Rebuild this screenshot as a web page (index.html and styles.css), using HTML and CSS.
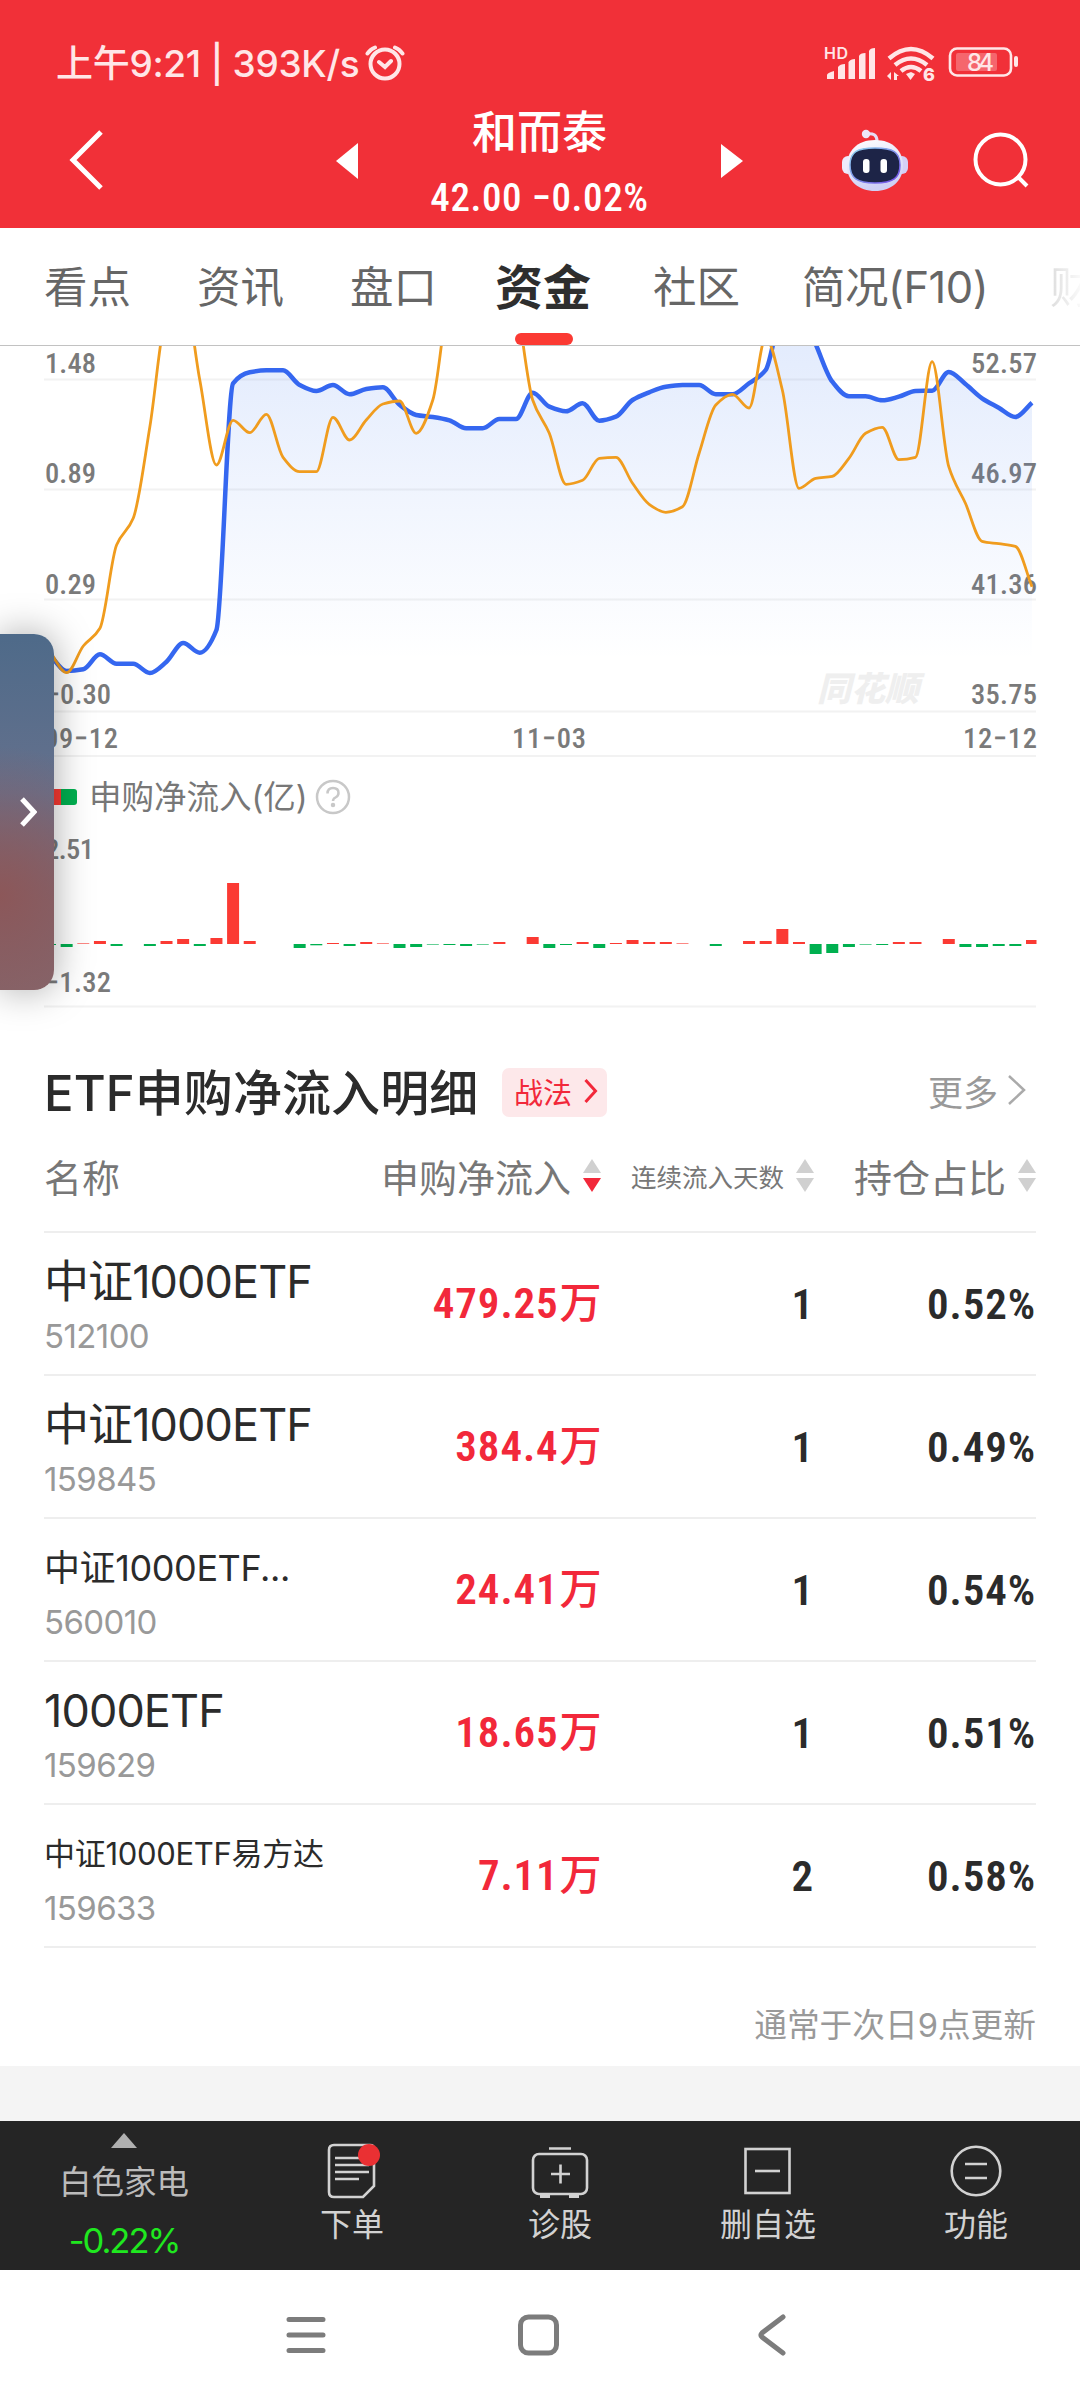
FILE: index.html
```html
<!DOCTYPE html>
<html lang="zh-CN">
  <head>
    <meta charset="UTF-8" />
    <meta name="viewport" content="width=device-width, initial-scale=1.0" />
    <title>和而泰 - 资金</title>
    <link rel="stylesheet" href="styles.css">
  </head>
  <body>
    <header class="header">
      <div class="status-bar">
        <span class="status-time">上午9:21 | 393K/s</span>
        <svg class="alarm" width="40" height="36" viewBox="0 0 40 36">
          <circle cx="20" cy="19" r="14.5" />
          <path d="M14 17l6 5 6-6M2.500 8.500Q5 4.500 10 2.500M37.500 8.500Q35 4.500 30 2.500" />
        </svg>
        <div class="status-icons">
          <svg width="194" height="40" viewBox="0 0 194 40">
            <g fill="#ffe6e7">
              <text class="hd" x="0" y="16" textLength="24">HD</text>
              <path d="M3 36v-4q0-2 7-4v8zM14 36V24q2-3 7-3v15zM24.500 36V19q2-3 6.500-3v20zM35 36V13q1-3 6.500-3v26zM45 36V8q1-3 6-3v31z" />
              <path d="M82 31l5-2 4 2-4.500 6z" />
              <text class="wifi-gen" x="99" y="38">6</text>
              <path d="M67 29v8l-4-4zM70 37v-8l5 4h-2v4z" />
              <rect x="132" y="10" width="41" height="18" rx="2" fill-opacity=".3" />
              <text class="battery-text" x="143" y="28" textLength="27">84</text>
              <rect x="190" y="13" width="4" height="11" rx="2" />
            </g>
            <g fill="none" stroke="#ffe6e7" stroke-width="4.500">
              <path d="M65 15.500q22-19 44 0M71 22q16-13 32 0M77 28q10-8 20 0" />
              <rect x="126" y="5.500" width="61" height="27" rx="7" stroke-width="2.600" />
            </g>
          </svg>
        </div>
      </div>

      <div class="title-bar">
        <svg class="back" width="40" height="64" viewBox="0 0 40 64">
          <path d="M34 4L6 32l28 28" />
        </svg>
        <svg class="prev" width="22" height="36" viewBox="0 0 22 36"><path d="M22 0v36L0 18z" /></svg>
        <div class="stock">
          <h1>和而泰</h1>
          <p>42.00 −0.02%</p>
        </div>
        <svg class="next" width="22" height="34" viewBox="0 0 22 34"><path d="M0 0v34l22-17z" /></svg>
        <svg class="robot" width="68" height="64" viewBox="0 0 68 64">
          <defs>
            <linearGradient id="shell" x1="0" y1="0" x2="0.300" y2="1">
              <stop offset="0" stop-color="#ffffff" />
              <stop offset="1" stop-color="#cfd0f6" />
            </linearGradient>
            <linearGradient id="rim" x1="0" y1="0" x2="1" y2="1">
              <stop offset="0" stop-color="#8fd8ee" />
              <stop offset="1" stop-color="#7048e8" />
            </linearGradient>
          </defs>
          <path d="M25 6q11-2 11 7" fill="none" stroke="#e6dcf5" stroke-width="3" />
          <circle cx="25" cy="6" r="4.200" fill="#eee6f8" />
          <rect x="1" y="28" width="12" height="18" rx="6" fill="#eeeafc" />
          <rect x="55" y="28" width="12" height="18" rx="6" fill="#d5cff7" />
          <path d="M34 12c18 0 28 11 28 26S50 63 34 63 6 53 6 38s10-26 28-26z" fill="url(#shell)" />
          <path d="M34 20c18 0 25 4 25 17s-7 18-25 18S9 50 9 37s7-17 25-17z" fill="#1d2447" stroke="url(#rim)" stroke-width="1.500" />
          <rect x="22" y="31" width="6.500" height="14" rx="3" fill="#fff" />
          <rect x="39.500" y="31" width="6.500" height="14" rx="3" fill="#fff" />
        </svg>
        <svg class="search" width="56" height="58" viewBox="0 0 56 58">
          <circle cx="27.500" cy="27.500" r="25" />
          <path d="M44 44l10 10" />
        </svg>
      </div>
    </header>

    <nav class="tabs">
      <span>看点</span>
      <span>资讯</span>
      <span>盘口</span>
      <span class="active">资金</span>
      <span>社区</span>
      <span class="profile">简况(F10)</span>
      <span class="faded">财</span>
    </nav>

    <main>
      <section class="charts">
        <svg class="line-chart" width="1080" height="414" viewBox="0 346 1080 414">
          <defs>
            <linearGradient id="area" gradientUnits="userSpaceOnUse" x1="0" y1="346" x2="0" y2="660">
              <stop offset="0" stop-color="#3a76f0" stop-opacity=".14" />
              <stop offset="1" stop-color="#3a76f0" stop-opacity="0" />
            </linearGradient>
          </defs>
          <path class="grid" d="M44 379.500H1036M44 489.500H1036M44 599.500H1036M44 711.500H1036M44 756H1036" />
          <text class="watermark" x="817" y="701" textLength="102">同花顺</text>
          <g class="axis">
            <text x="45" y="373" textLength="51">1.48</text>
            <text x="45" y="483" textLength="51">0.89</text>
            <text x="45" y="594" textLength="51">0.29</text>
            <text x="46" y="704" textLength="65">−0.30</text>
            <text x="971" y="373" textLength="66">52.57</text>
            <text x="971" y="483" textLength="66">46.97</text>
            <text x="971" y="594" textLength="66">41.36</text>
            <text x="971" y="704" textLength="66">35.75</text>
            <text x="44" y="748" textLength="74">09−12</text>
            <text x="512" y="748" textLength="74">11−03</text>
            <text x="963" y="748" textLength="74">12−12</text>
          </g>
          <path id="netArea" fill="url(#area)" />
          <path id="netLine" class="net-line" />
          <path id="priceLine" class="price-line" />
        </svg>

        <div class="legend">
          <i class="swatch"></i>
          <span>申购净流入(亿)</span>
          <svg width="36" height="36" viewBox="0 0 36 36">
            <circle cx="18" cy="18" r="16" />
            <path d="M12.500 14.500q0-5.500 5.500-5.500t5.500 5q0 3-3 4.500-2.500 1.200-2.500 3.500v0" />
            <circle class="dot" cx="18" cy="26" r="1" />
          </svg>
        </div>

        <svg class="bar-chart" width="1080" height="180" viewBox="0 830 1080 180">
          <path class="grid" d="M44 1006.500H1036" />
          <g class="axis">
            <text x="45" y="859" textLength="49">2.51</text>
            <text x="45" y="992" textLength="66">−1.32</text>
          </g>
          <g id="bars"></g>
        </svg>

        <div class="drawer">
          <svg width="18" height="32" viewBox="0 0 18 32"><path d="M3 3l12 13L3 29" /></svg>
        </div>
      </section>

      <section class="detail">
        <div class="detail-head">
          <h2>ETF申购净流入明细</h2>
          <span class="badge">战法
            <svg width="14" height="26" viewBox="0 0 14 26"><path d="M1.500 2l10 11-10 11" /></svg>
          </span>
          <span class="more">更多
            <svg width="20" height="32" viewBox="0 0 20 32"><path d="M2 2l15 14L2 30" /></svg>
          </span>
        </div>

        <div class="row row-head">
          <span>名称</span>
          <span class="cell">申购净流入 <i class="sort desc"></i></span>
          <span class="cell small">连续流入天数 <i class="sort"></i></span>
          <span class="cell">持仓占比 <i class="sort"></i></span>
        </div>

        <div class="row">
          <div class="fund"><b>中证1000ETF</b><small>512100</small></div>
          <span class="amount">479.25<em>万</em></span>
          <span class="num">1</span>
          <span class="num">0.52%</span>
        </div>
        <div class="row">
          <div class="fund"><b>中证1000ETF</b><small>159845</small></div>
          <span class="amount">384.4<em>万</em></span>
          <span class="num">1</span>
          <span class="num">0.49%</span>
        </div>
        <div class="row">
          <div class="fund"><b class="md">中证1000ETF...</b><small>560010</small></div>
          <span class="amount">24.41<em>万</em></span>
          <span class="num">1</span>
          <span class="num">0.54%</span>
        </div>
        <div class="row">
          <div class="fund"><b>1000ETF</b><small>159629</small></div>
          <span class="amount">18.65<em>万</em></span>
          <span class="num">1</span>
          <span class="num">0.51%</span>
        </div>
        <div class="row">
          <div class="fund"><b class="sm">中证1000ETF易方达</b><small>159633</small></div>
          <span class="amount">7.11<em>万</em></span>
          <span class="num">2</span>
          <span class="num">0.58%</span>
        </div>

        <p class="note">通常于次日9点更新</p>
      </section>
    </main>

    <footer class="toolbar">
      <div class="sector">
        <i class="caret"></i>
        <span>白色家电</span>
        <strong>-0.22%</strong>
      </div>
      <div class="tool">
        <svg width="60" height="60" viewBox="0 0 60 60">
          <path d="M12 4h36q4 0 4 4v37L41 56H12q-5 0-5-5V9q0-5 5-5z" />
          <path d="M13 17h34M13 24h34M13 31h34M13 38h24" />
          <circle class="red-dot" cx="47" cy="14" r="11" />
        </svg>
        <span>下单</span>
      </div>
      <div class="tool">
        <svg width="60" height="60" viewBox="0 0 60 60">
          <rect x="3" y="13" width="54" height="40" rx="6" />
          <path d="M19 7.500h22M21 33h19M30.500 23.500v19" />
          <path stroke-width="4" d="M10 55h10M39 55h10" />
        </svg>
        <span>诊股</span>
      </div>
      <div class="tool">
        <svg width="60" height="60" viewBox="0 0 60 60">
          <rect x="7.500" y="8" width="44" height="44" />
          <path d="M17 30h25" />
        </svg>
        <span>删自选</span>
      </div>
      <div class="tool">
        <svg width="60" height="60" viewBox="0 0 60 60">
          <circle cx="30" cy="30" r="24.300" />
          <path d="M19 23h22M19 37h22" />
        </svg>
        <span>功能</span>
      </div>
    </footer>

    <div class="system-nav">
      <svg width="44" height="44" viewBox="0 0 44 44"><path d="M5 6.500h34M5 22h34M5 37.500h34" /></svg>
      <svg width="44" height="44" viewBox="0 0 44 44"><rect x="3.500" y="4" width="36" height="36" rx="8" /></svg>
      <svg width="44" height="44" viewBox="0 0 44 44"><path d="M33 4L12 20q-2 2 0 4l21 16" /></svg>
    </div>

    <script src="script.js"></script>
  </body>
</html>
```
FILE: styles.css
```css
* {
  margin: 0;
  padding: 0;
  box-sizing: border-box;
}

body {
  width: 1080px;
  height: 2400px;
  overflow: hidden;
  background-color: #fff;
  font-family: Inter, "Noto Sans CJK SC", sans-serif;
  color: #2b2b2b;
}

svg {
  display: block;
  flex: none;
}

i,
em {
  font-style: normal;
}

/* Header */
.header {
  height: 228px;
  background-color: #f13038;
  color: #fff;
}

.status-bar {
  display: flex;
  align-items: center;
  height: 108px;
  padding: 18px 62px 0 56px;
}

.status-time {
  width: 309px;
  padding-bottom: 4px;
  color: #ffe6e7;
  font-size: 37px;
  font-weight: 500;
  letter-spacing: -0.3px;
  white-space: nowrap;
}

.alarm {
  fill: none;
  stroke: #ffe6e7;
  stroke-width: 4;
  stroke-linecap: round;
}

.status-icons {
  margin-left: auto;
}

.status-icons svg {
  overflow: visible;
}

.hd {
  font-size: 16px;
  font-weight: 600;
}

.wifi-gen {
  font-size: 18px;
  font-weight: 800;
}

.battery-text {
  font-size: 24px;
  font-weight: 500;
}

.title-bar {
  display: flex;
  align-items: center;
  height: 106px;
}

.back {
  margin: -3px 0 0 67px;
  fill: none;
  stroke: #fff;
  stroke-width: 5;
}

.prev {
  margin-left: 229px;
  fill: #fff;
}

.next {
  fill: #fff;
}

.stock {
  width: 363px;
  text-align: center;
}

.stock h1 {
  height: 68px;
  font-size: 45px;
  font-weight: 500;
  line-height: 59px;
}

.stock p {
  height: 48px;
  font-family: Roboto, sans-serif;
  font-size: 39px;
  font-weight: 500;
  font-stretch: 85%;
  line-height: 54px;
  letter-spacing: 0.6px;
  white-space: nowrap;
}

.robot {
  margin: -2px 0 0 98px;
}

.search {
  margin-left: 64px;
  fill: none;
  stroke: #fff;
  stroke-width: 4;
}

/* Tabs */
.tabs {
  display: flex;
  align-items: center;
  gap: 66px;
  height: 118px;
  padding: 0 0 5px 44px;
  border-bottom: 1px solid #c2c2c2;
  overflow: hidden;
  white-space: nowrap;
  font-size: 43.5px;
  color: #666;
}

.tabs .active {
  position: relative;
  margin: 0 -4px 0 -8px;
  font-size: 48px;
  font-weight: 700;
  color: #2e2e2e;
}

.tabs .active::after {
  content: "";
  position: absolute;
  left: 20px;
  bottom: -26px;
  width: 58px;
  height: 12px;
  border-radius: 6px;
  background-color: #fb3a33;
}

.tabs .profile {
  margin: 0 -4px 0 -4px;
  letter-spacing: -0.5px;
}

.tabs .faded {
  background: linear-gradient(90deg, #ddd, #fff 36px);
  -webkit-background-clip: text;
  background-clip: text;
  color: transparent;
}

/* Charts */
.charts {
  position: relative;
}

.grid {
  stroke: #f2f2f2;
  stroke-width: 2;
}

.axis {
  fill: #7a7a7a;
  font-family: Roboto, sans-serif;
  font-size: 28.5px;
  font-weight: 500;
  font-stretch: 85%;
}

.watermark {
  fill: #efefef;
  font-size: 34px;
  font-weight: 900;
  font-style: italic;
}

.net-line {
  fill: none;
  stroke: #3567f0;
  stroke-width: 4.5;
  stroke-linejoin: round;
}

.price-line {
  fill: none;
  stroke: #f09c1e;
  stroke-width: 2.8;
  stroke-linejoin: round;
}

.legend {
  display: flex;
  align-items: center;
  height: 70px;
  padding: 4px 0 0 45px;
  font-size: 32.5px;
  color: #777;
}

.legend span {
  margin-bottom: 6px;
}

.swatch {
  width: 32px;
  height: 16px;
  margin-right: 12px;
  border-radius: 3px;
  background: linear-gradient(90deg, #fb3a33 50%, #00b050 50%);
}

.legend svg {
  margin-left: 7px;
  fill: none;
  stroke: #c8c8c8;
  stroke-width: 2.5;
}

.legend .dot {
  fill: #c8c8c8;
}

.up {
  fill: #fb3a33;
}

.down {
  fill: #00b050;
}

.drawer {
  position: absolute;
  left: 0;
  top: 288px;
  display: flex;
  align-items: center;
  width: 54px;
  height: 356px;
  padding-left: 19px;
  border-radius: 0 20px 20px 0;
  background: radial-gradient(circle at 0 262px, #8c5759, rgba(140, 87, 89, 0) 150px),
    linear-gradient(#4e6a89, #65718d 45%, #7d6872 75%, #84686e);
  box-shadow: 0 0 38px rgba(0, 0, 0, 0.35);
}

.drawer path {
  fill: none;
  stroke: #fff;
  stroke-width: 5;
}

/* ETF detail */
.detail {
  height: 1056px;
  padding: 36px 44px 0;
}

.detail-head {
  display: flex;
  align-items: center;
  height: 92px;
}

.detail-head h2 {
  width: 458px;
  margin-bottom: 6px;
  font-size: 49px;
  font-weight: 500;
  letter-spacing: 0.1px;
  white-space: nowrap;
}

.badge {
  display: flex;
  align-items: center;
  justify-content: space-between;
  width: 105px;
  height: 49px;
  padding: 0 9px 2px 12px;
  border-radius: 7px;
  background-color: #fde8ea;
  color: #f2283a;
  font-size: 29px;
}

.badge path {
  fill: none;
  stroke: #f2283a;
  stroke-width: 3;
}

.more {
  display: flex;
  align-items: center;
  gap: 9px;
  margin: 0 9px 4px auto;
  color: #999;
  font-size: 35px;
}

.more path {
  fill: none;
  stroke: #aaa;
  stroke-width: 2.5;
}

.row {
  display: grid;
  grid-template-columns: 310px 246px 214px 222px;
  align-items: center;
  height: 143px;
  border-bottom: 2px solid #eee;
  text-align: right;
}

.row-head {
  height: 95px;
  padding-bottom: 18px;
  color: #777;
  font-size: 38px;
}

.row-head > :first-child {
  text-align: left;
}

.cell {
  display: flex;
  align-items: center;
  justify-content: flex-end;
  gap: 12px;
  white-space: nowrap;
}

.cell.small {
  font-size: 25.5px;
}

.cell:nth-child(2) {
  margin-right: -1px;
}

.sort::before,
.sort::after {
  content: "";
  display: block;
  border: 9.5px solid transparent;
}

.sort::before {
  border-top: 0;
  border-bottom: 14px solid #d0d0d0;
  margin-bottom: 5px;
}

.sort::after {
  border-bottom: 0;
  border-top: 14px solid #d0d0d0;
}

.sort.desc::after {
  border-top-color: #f2283a;
}

.fund {
  padding-top: 4px;
  text-align: left;
  white-space: nowrap;
}

.fund b {
  display: block;
  height: 62px;
  line-height: 64px;
  font-size: 45px;
  font-weight: 400;
  letter-spacing: -0.9px;
}

.fund b.md {
  font-size: 36px;
  letter-spacing: -0.4px;
}

.fund b.sm {
  font-size: 31px;
  letter-spacing: -0.3px;
}

.fund small {
  display: block;
  height: 50px;
  line-height: 48px;
  font-size: 33px;
  font-weight: 400;
  letter-spacing: -0.6px;
  color: #999;
}

.amount,
.num {
  font-family: Roboto, "Noto Sans CJK SC", sans-serif;
  font-size: 43px;
  font-weight: 600;
  font-stretch: 85%;
  letter-spacing: 0.9px;
  line-height: 60px;
}

.amount {
  color: #f2283a;
}

.amount em {
  margin-left: 1px;
  font-size: 42px;
  font-weight: 500;
  letter-spacing: -1.6px;
}

.note {
  padding-top: 53px;
  font-size: 32.7px;
  line-height: 48px;
  text-align: right;
  color: #999;
}

/* Toolbar */
.toolbar {
  display: grid;
  grid-template-columns: 248px repeat(4, 208px);
  height: 204px;
  border-top: 55px solid #f4f4f4;
  background-color: #252525;
  color: #d2d2d2;
  font-size: 32px;
  text-align: center;
}

.sector {
  display: flex;
  flex-direction: column;
  align-items: center;
  padding-top: 12px;
  color: #bbb;
}

.caret {
  border: 13px solid transparent;
  border-top: 0;
  border-bottom: 15px solid #b0b0b0;
}

.sector span {
  margin-top: 11px;
  font-size: 32.5px;
  line-height: 48px;
}

.sector strong {
  margin-top: 10px;
  font-size: 34.5px;
  font-weight: 400;
  line-height: 48px;
  letter-spacing: -2px;
  color: #1fe81f;
}

.tool {
  display: flex;
  flex-direction: column;
  align-items: center;
  padding-top: 20px;
}

.tool svg {
  fill: none;
  stroke: #d2d2d2;
  stroke-width: 2.6;
}

.tool .red-dot {
  fill: #ea3033;
  stroke: none;
}

.tool span {
  line-height: 47px;
}

/* Android navigation */
.system-nav {
  display: grid;
  grid-template-columns: repeat(3, 1fr);
  align-items: center;
  justify-items: center;
  height: 130px;
  padding: 0 191px 0 189px;
}

.system-nav svg {
  fill: none;
  stroke: #7c7c7c;
  stroke-width: 5;
  stroke-linecap: round;
}
```
FILE: script.js
```js
const START = 50;
const STEP = 16.644;

const net = [
  655, 671, 669.3, 654.3, 663.7, 663.7, 673, 661.7, 643, 652.7,
  630, 383.3, 372.3, 370.3, 370.3, 385, 391, 385, 394.3, 389,
  387.3, 404.7, 415, 417, 420.3, 428.3, 428.3, 419, 419, 392.7,
  406.7, 411.3, 403.3, 420.7, 416.7, 400, 392.3, 386.7, 385, 385,
  394.3, 394.3, 383.3, 370, 312, 306, 344, 381.7, 396.3, 396.3,
  400.3, 396.7, 391, 390.7, 372, 384, 398.3, 407.7, 417, 402.7
];

const price = [
  652, 672.7, 646, 628.3, 545, 518.3, 426.7, 313, 290, 380,
  465, 420.3, 432.7, 414.3, 457.3, 471.7, 471.7, 417.3, 440, 420,
  404, 401, 433.3, 400, 290, 240, 240, 240, 300, 400,
  433.3, 484.3, 480.3, 458.3, 457.3, 483.3, 504.3, 512.3, 506.7, 453.3,
  405, 394.3, 408, 338, 390, 488.3, 478.3, 476.3, 458.3, 433.3,
  427.3, 459.7, 457.3, 361.7, 466.7, 503.3, 541.3, 543.7, 546.3, 586.7
];

const flow = [
  -1, -3, 0.6, 3, -2, 0, -2, 3, 5, -2,
  6, 61, 3, 0, 0, -4, -1.3, 1, -2, 2,
  0.6, -4, -3, -0.6, -1, -2, -0.6, 2, 0, 7,
  -4, -1, 2, -4, 1, 4, 2, 2, 0.6, 0,
  -2, 0, 3, 3, 15, 2, -10, -9, -3, -0.6,
  -1, 2, 2, 0, 5, -3, -3, -2, -2, 4
];

// Monotone cubic curve through evenly spaced points
function smoothPath(ys) {
  const d = ys.slice(1).map((y, i) => y - ys[i]);
  const m = ys.map((y, i) => {
    if (i === 0) return d[0];
    if (i === ys.length - 1) return d[i - 1];
    if (d[i - 1] * d[i] <= 0) return 0;
    return (2 * d[i - 1] * d[i]) / (d[i - 1] + d[i]);
  });
  let path = `M${START} ${ys[0]}`;
  for (let i = 1; i < ys.length; i++) {
    const x = START + STEP * i;
    path += `C${x - (STEP * 2) / 3} ${ys[i - 1] + m[i - 1] / 3} ${x - STEP / 3} ${ys[i] - m[i] / 3} ${x} ${ys[i]}`;
  }
  return path;
}

const netPath = smoothPath(net);
document.getElementById("netLine").setAttribute("d", netPath);
document.getElementById("netArea").setAttribute("d", `${netPath}V660H${START}Z`);
document.getElementById("priceLine").setAttribute("d", smoothPath(price));

const bars = document.getElementById("bars");
flow.forEach((value, i) => {
  if (!value) return;
  const rect = document.createElementNS("http://www.w3.org/2000/svg", "rect");
  const x = START + STEP * i - 6;
  rect.setAttribute("x", x);
  rect.setAttribute("y", value > 0 ? 944 - value : 944);
  rect.setAttribute("width", Math.min(12, 1036.5 - x));
  rect.setAttribute("height", Math.abs(value));
  rect.setAttribute("class", value > 0 ? "up" : "down");
  bars.appendChild(rect);
});
```
